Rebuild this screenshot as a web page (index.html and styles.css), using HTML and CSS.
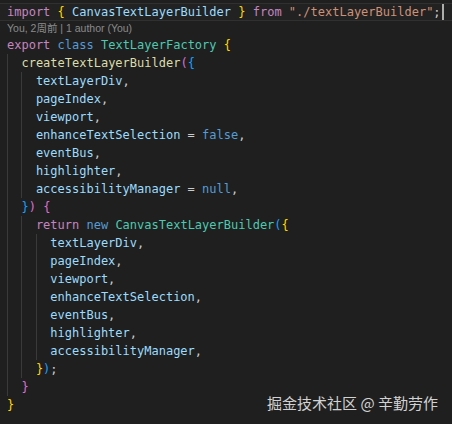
FILE: index.html
```html
<!DOCTYPE html>
<html lang="zh">
<head>
    <meta charset="UTF-8">
    <title>textLayerFactory.js</title>
    <link rel="stylesheet" href="styles.css">
</head>
<body>
    <div class="editor">
        <div class="line current"><span class="kw">import</span> <span class="b1">{</span> <span class="var">CanvasTextLayerBuilder</span> <span class="b1">}</span> <span class="kw">from</span> <span class="str">"./textLayerBuilder"</span>;<span class="cursor"></span></div>
        <div class="lens">You, 2周前 | 1 author (You)</div>
        <div class="line"><span class="kw">export</span> <span class="st">class</span> <span class="cls">TextLayerFactory</span> <span class="b1">{</span></div>
        <div class="block top">
            <div class="line"><span class="fn">createTextLayerBuilder</span><span class="b2">(</span><span class="b3">{</span></div>
            <div class="block">
                <div class="line"><span class="var">textLayerDiv</span>,</div>
                <div class="line"><span class="var">pageIndex</span>,</div>
                <div class="line"><span class="var">viewport</span>,</div>
                <div class="line"><span class="var">enhanceTextSelection</span> = <span class="st">false</span>,</div>
                <div class="line"><span class="var">eventBus</span>,</div>
                <div class="line"><span class="var">highlighter</span>,</div>
                <div class="line"><span class="var">accessibilityManager</span> = <span class="st">null</span>,</div>
            </div>
            <div class="line"><span class="b3">}</span><span class="b2">)</span> <span class="b2">{</span></div>
            <div class="block">
                <div class="line"><span class="kw">return</span> <span class="st">new</span> <span class="cls">CanvasTextLayerBuilder</span><span class="b3">(</span><span class="b1">{</span></div>
                <div class="block">
                    <div class="line"><span class="var">textLayerDiv</span>,</div>
                    <div class="line"><span class="var">pageIndex</span>,</div>
                    <div class="line"><span class="var">viewport</span>,</div>
                    <div class="line"><span class="var">enhanceTextSelection</span>,</div>
                    <div class="line"><span class="var">eventBus</span>,</div>
                    <div class="line"><span class="var">highlighter</span>,</div>
                    <div class="line"><span class="var">accessibilityManager</span>,</div>
                </div>
                <div class="line"><span class="b1">}</span><span class="b3">)</span>;</div>
            </div>
            <div class="line"><span class="b2">}</span></div>
        </div>
        <div class="line"><span class="b1">}</span></div>
    </div>
    <div class="watermark">掘金技术社区 @ 辛勤劳作</div>
</body>
</html>
```

FILE: styles.css
```css
body {
    margin: 0;
    width: 452px;
    height: 424px;
    overflow: hidden;
    background-color: #1f1f1f;
    position: relative;
}
.editor {
    padding-top: 3px;
    font-family: "DejaVu Sans Mono", "Liberation Mono", monospace;
    font-size: 12px;
    color: #cccccc;
}
.line {
    height: 18px;
    line-height: 18px;
    white-space: pre;
}
.editor > .line,
.lens {
    padding-left: 7px;
}
.line.current {
    height: 16px;
    line-height: 16px;
    background-color: #222222;
    border-top: 1px solid #303030;
    border-bottom: 1px solid #303030;
}
.cursor {
    display: inline-block;
    width: 2px;
    height: 16px;
    vertical-align: -4px;
    margin-left: 1px;
    background-color: #aeafad;
}
.lens {
    height: 15px;
    line-height: 15px;
    font-family: "Liberation Sans", "Noto Sans CJK SC", sans-serif;
    font-size: 10.5px;
    color: #8b8b8b;
}
/* indent guides, one per nesting level */
.block {
    border-left: 1px solid #3a3a3a;
    padding-left: calc(2ch - 1px);
}
.block.top {
    margin-left: 7px;
}
.kw { color: #c586c0; }
.st { color: #569cd6; }
.cls { color: #4ec9b0; }
.var { color: #9cdcfe; }
.fn { color: #dcdcaa; }
.str { color: #ce9178; }
.b1 { color: #ffd700; }
.b2 { color: #da70d6; }
.b3 { color: #179fff; }
.watermark {
    position: absolute;
    right: 14px;
    bottom: 11px;
    font-family: "Noto Sans CJK SC", sans-serif;
    font-size: 15px;
    color: #d2d2d2;
}
```
